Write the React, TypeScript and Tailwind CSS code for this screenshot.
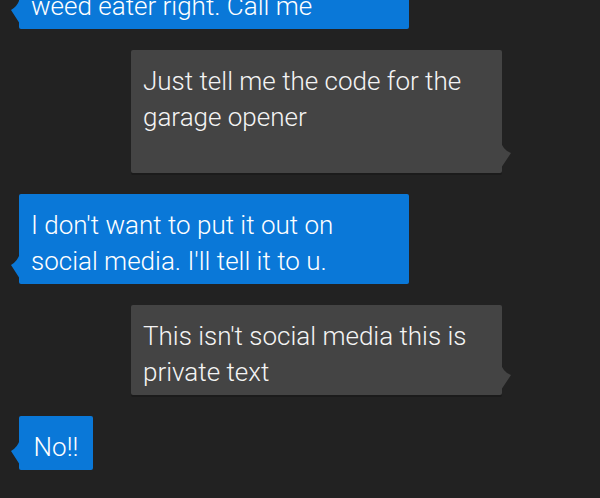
type Side = "in" | "out";

function Tail({ side }: { side: Side }) {
  // little pointer on the bubble edge
  if (side === "in") {
    return (
      <svg
        className="absolute bottom-[5px] left-[-9px] h-[26px] w-[10px]"
        viewBox="0 0 10 26"
      >
        <path d="M10 0 Q8 8 1 12 L10 26 Z" fill="#0a78d8" />
      </svg>
    );
  }
  return (
    <svg
      className="absolute bottom-[5px] right-[-10px] h-[26px] w-[11px]"
      viewBox="0 0 11 26"
    >
      <path d="M0 0 Q2 8 10 11 L0 26 Z" fill="#444444" />
    </svg>
  );
}

function Bubble({
  side,
  children,
  className = "",
}: {
  side: Side;
  children: React.ReactNode;
  className?: string;
}) {
  const base =
    side === "in"
      ? "self-start ml-[19px] w-[390px] bg-[#0a78d8] text-white"
      : "self-start ml-[131px] w-[371px] bg-[#444444] text-[#f4f4f4] shadow-[0_2px_0_#1b1b1b]";
  return (
    <div className={`relative rounded-[2px] px-[12px] pt-[13px] pb-[5px] text-[26px] font-light leading-[36px] ${base} ${className}`}>
      {children}
      <Tail side={side} />
    </div>
  );
}

export default function App() {
  return (
    <div
      className="h-[498px] w-[600px] overflow-hidden bg-[#222222]"
      style={{ fontFamily: "Roboto, 'Liberation Sans', sans-serif" }}
    >
      <div className="flex flex-col gap-[21px]">
        <Bubble side="in" className="mt-[-25px]">
          weed eater right. Call me
        </Bubble>
        <Bubble side="out" className="pb-[38px]">
          Just tell me the code for the
          <br />
          garage opener
        </Bubble>
        <Bubble side="in">
          I don't want to put it out on
          <br />
          social media. I'll tell it to u.
        </Bubble>
        <Bubble side="out">
          This isn't social media this is
          <br />
          private text
        </Bubble>
        <Bubble side="in" className="!w-[74px] text-center">
          No!!
        </Bubble>
      </div>
    </div>
  );
}
